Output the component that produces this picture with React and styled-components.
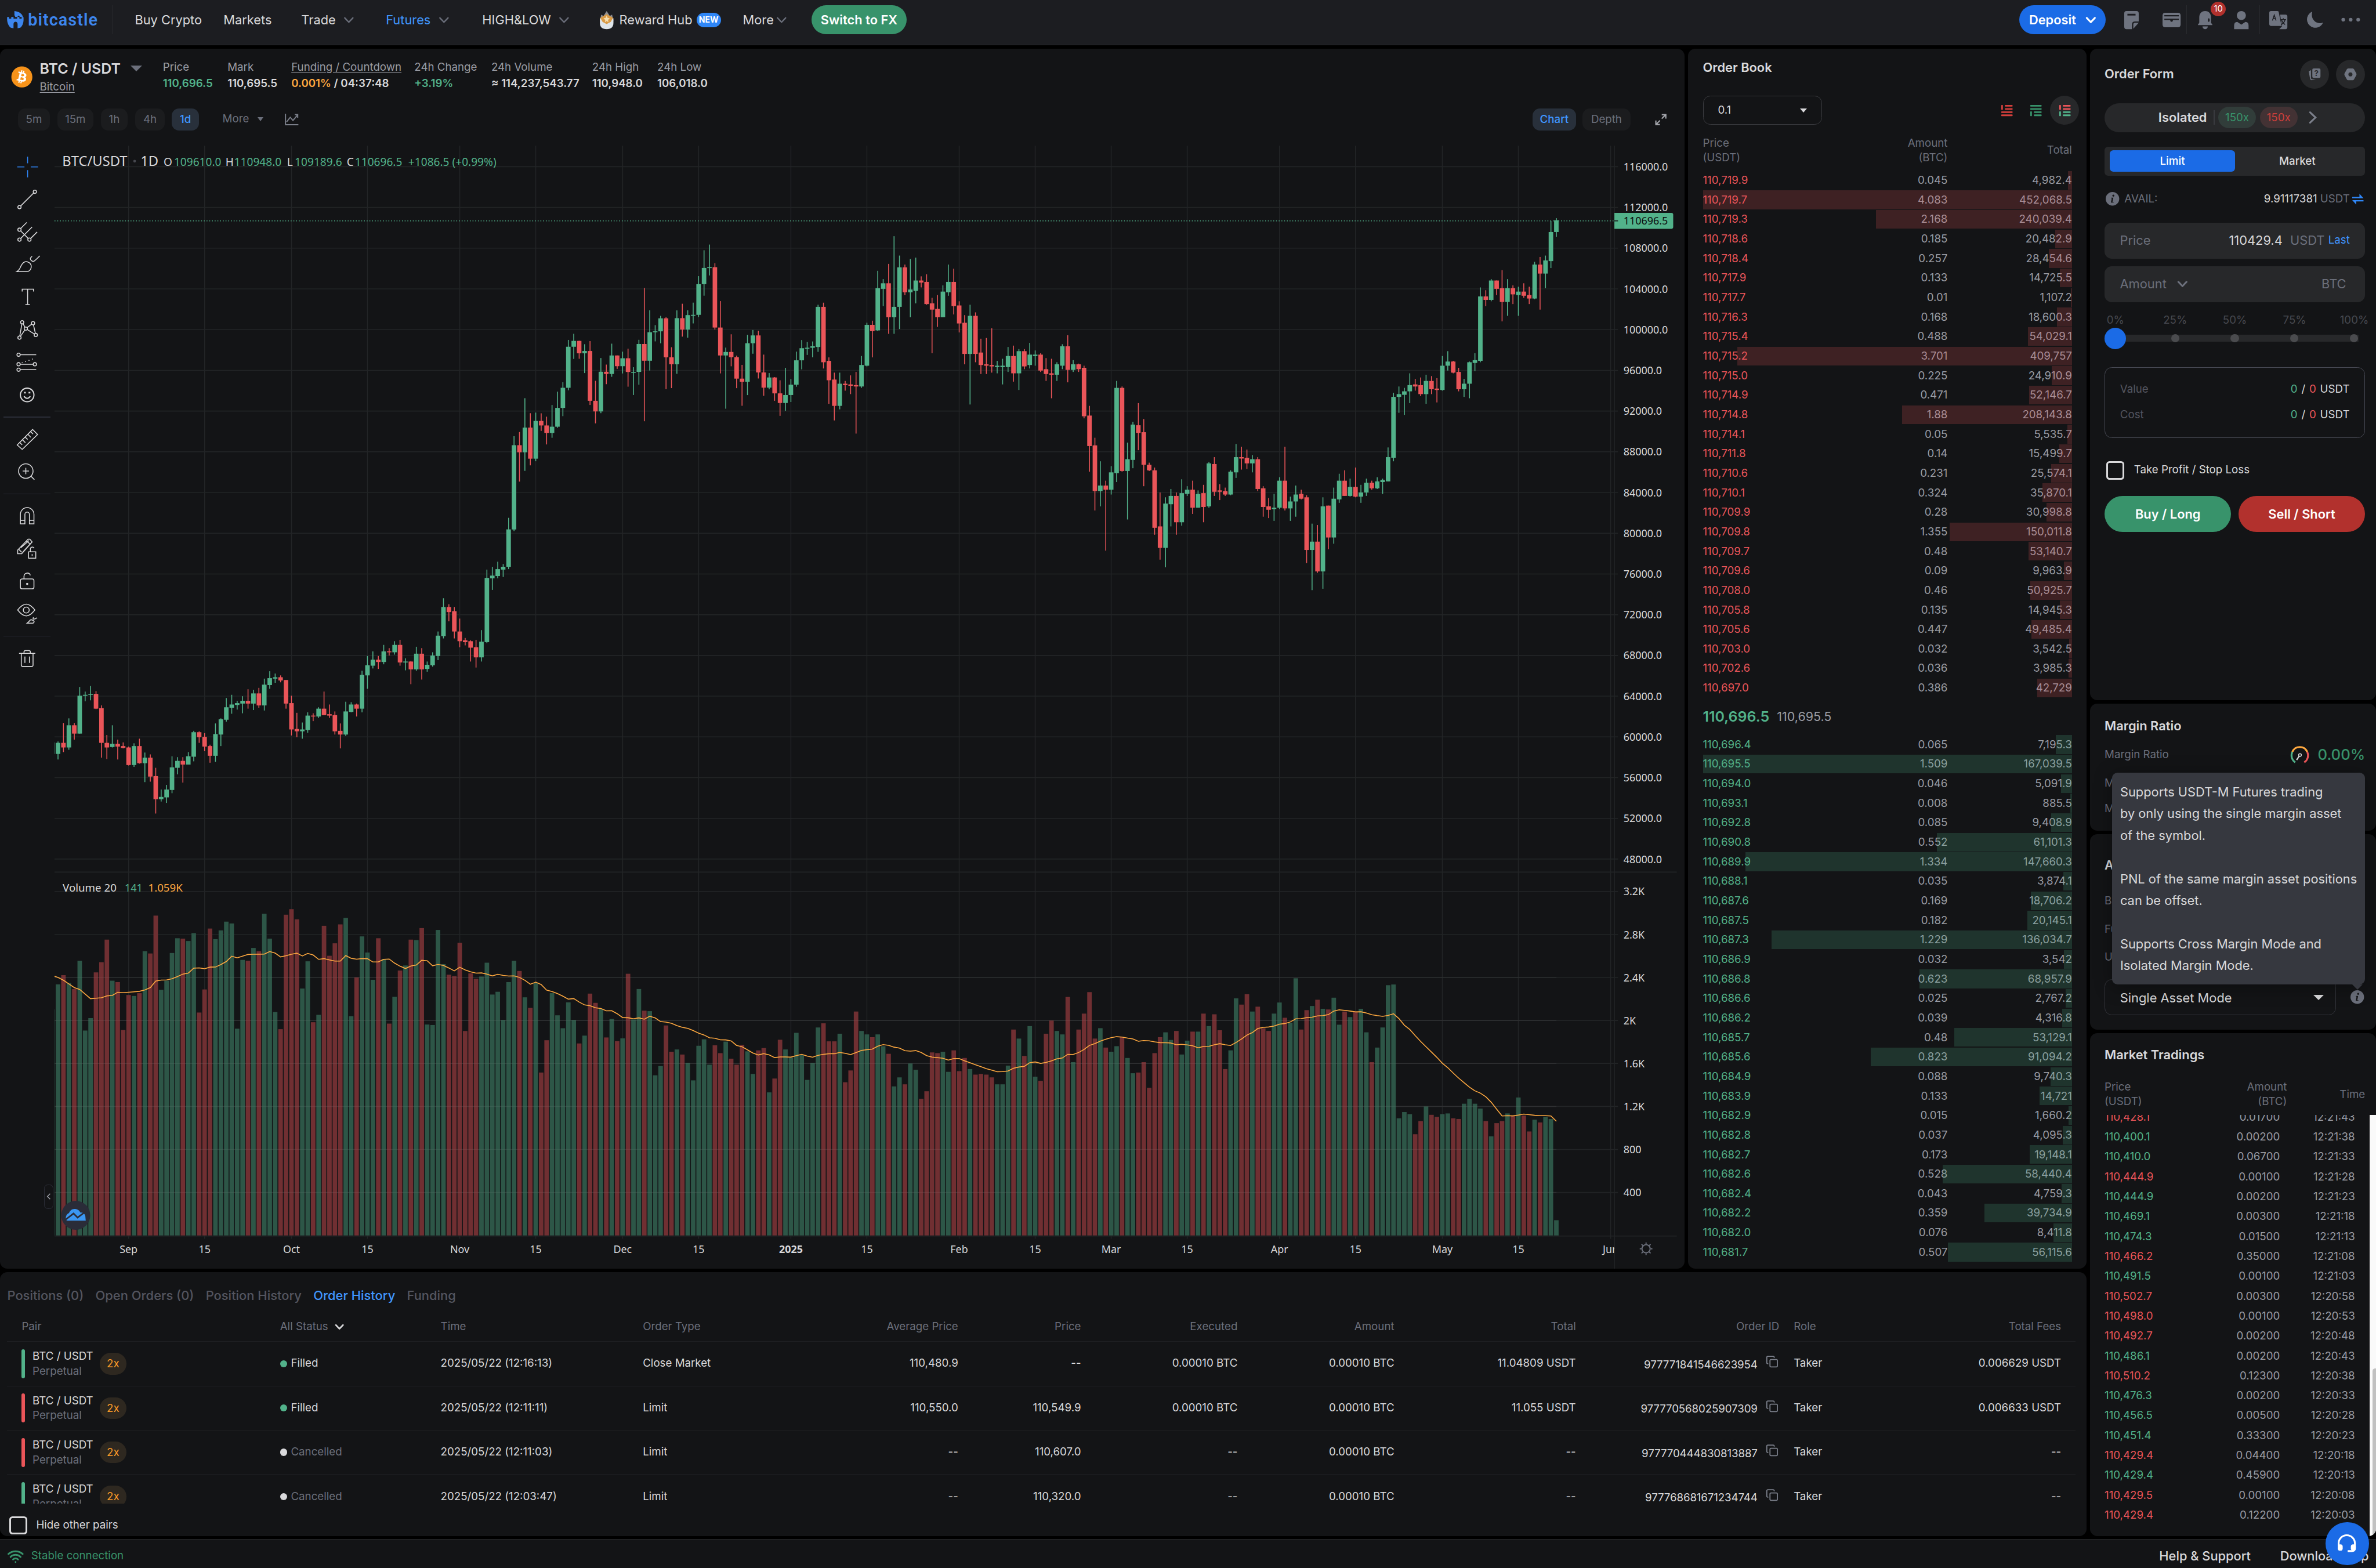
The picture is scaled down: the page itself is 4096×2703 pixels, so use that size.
import React from 'react';
import styled, { createGlobalStyle, css } from 'styled-components';
import { FaBitcoin } from 'react-icons/fa';
import { Copy, Wifi } from 'lucide-react';

/* 1rem equals 100 design pixels on a 5252px wide artboard */
const Global = createGlobalStyle`
  html { font-size: calc(100vw / 52.52); background: #000; }
  body { margin: 0; background: #000; overflow: hidden; }
  *, *::before, *::after { box-sizing: border-box; }
  body, button { font-family: Inter, "Liberation Sans", sans-serif; }
`;

const C = {
  panel: '#131416',
  text: '#d9d9db',
  mid: '#9a9ca4',
  muted: '#6b6f7b',
  dim: '#53555f',
  line: '#1e1f22',
  field: '#27282a',
  green: '#52b28a',
  greenDeep: '#38936b',
  red: '#ea5559',
  redDeep: '#b2312d',
  blue: '#4096ff',
  blueDeep: '#1b6be6',
  orange: '#ffa940',
};

/* ---------- shared ---------- */
const Page = styled.div`
  width: 52.52rem;
  height: 34.66rem;
  display: flex;
  flex-direction: column;
  overflow: hidden;
  color: ${C.text};
  font-size: 0.24rem;
  line-height: 0.32rem;
  white-space: nowrap;
`;

const Panel = styled.section`
  background: ${C.panel};
  border-radius: 0.16rem;
  overflow: hidden;
  flex: none;
  height: ${(p) => p.$h}rem;
  width: ${(p) => (p.$w ? `${p.$w}rem` : 'auto')};
`;

const Row = styled.div`
  display: flex;
  align-items: center;
`;

const Icon = styled.svg`
  display: block;
  flex: none;
  width: ${(p) => p.$w}rem;
  height: ${(p) => p.$h || p.$w}rem;
  fill: ${(p) => p.$fill || 'none'};
  stroke: ${(p) => p.$stroke || 'none'};
  stroke-width: ${(p) => p.$sw || 2};
  stroke-linecap: ${(p) => p.$cap || 'butt'};
  overflow: visible;
`;

const Chevron = ({ w = 0.24, color = C.muted, sw = 4 }) => (
  <Icon $w={w} $h={w} viewBox="0 0 24 24" $stroke={color} $sw={sw} $cap="round">
    <path d="M3 7.5 12 17l9-9.5" strokeLinejoin="round" />
  </Icon>
);

const Caret = styled.i`
  width: 0;
  height: 0;
  border-left: ${(p) => p.$s}rem solid transparent;
  border-right: ${(p) => p.$s}rem solid transparent;
  border-top: ${(p) => p.$h}rem solid ${(p) => p.$c || C.muted};
`;

const InfoIcon = () => (
  <Icon $w={0.3} viewBox="0 0 30 30" $fill={C.muted}>
    <circle cx="15" cy="15" r="15" />
    <path d="M12 12.5h5l-2 9.500h2.500v1.500h-6l2-9.500H12z" fill={C.panel} />
    <circle cx="17" cy="8" r="2.200" fill={C.panel} />
  </Icon>
);

const CheckBox = styled.span`
  width: 0.4rem;
  height: 0.4rem;
  border: 0.04rem solid ${C.text};
  border-radius: 0.07rem;
`;

/* ---------- top bar ---------- */
const Header = styled.header`
  height: 1rem;
  flex: none;
  display: flex;
  align-items: flex-start;
  background: #1c1d21;
  border-bottom: 0.02rem solid #27282b;
  padding: 0.12rem 0 0 0.16rem;
`;

const HeaderInner = styled.div`
  height: 0.64rem;
  display: flex;
  align-items: center;
  flex: 1;
`;

const Logo = styled.div`
  width: 2.34rem;
  height: 0.64rem;
  display: flex;
  align-items: center;
  gap: 0.09rem;
  color: #3d86ee;
  font: 600 0.37rem/0.4rem Roboto, sans-serif;
  letter-spacing: 0.013rem;
  border-right: 0.02rem solid #2a2b2f;
`;

const NavItem = styled.a`
  width: ${(p) => p.$w}rem;
  display: flex;
  align-items: center;
  gap: ${(p) => p.$gap || 0.17}rem;
  font-size: 0.28rem;
  font-weight: 400;
  color: ${(p) => (p.$on ? C.blue : C.text)};
`;

const NewTag = styled.span`
  background: #2f86f6;
  color: #fff;
  border-radius: 0.16rem;
  height: 0.32rem;
  width: 0.54rem;
  text-align: center;
  font-weight: 700;
  font-size: 0.18rem;
`;

const PillButton = styled.button`
  height: ${(p) => p.$h || 0.64}rem;
  width: ${(p) => p.$w}rem;
  border: 0;
  border-radius: 0.4rem;
  padding: 0;
  background: ${(p) => p.$bg};
  color: #fff;
  font-size: 0.28rem;
  font-weight: 600;
  display: flex;
  align-items: center;
  justify-content: center;
  gap: 0.2rem;
`;

const IconStrip = styled.div`
  margin-left: auto;
  display: flex;
  align-items: center;
  height: 0.64rem;
`;

const IconSlot = styled.div`
  width: ${(p) => p.$w}rem;
  height: 0.64rem;
  display: flex;
  align-items: center;
  justify-content: center;
  position: relative;
  ${(p) => p.$rule && css`border-right: 0.02rem solid #2a2b2f;`}
`;

const Bubble = styled.span`
  position: absolute;
  top: -0.08rem;
  left: 0.53rem;
  width: 0.33rem;
  height: 0.32rem;
  border-radius: 50%;
  background: ${C.redDeep};
  color: #fff;
  font-size: 0.19rem;
  text-align: center;
`;

const NavSpacer = styled.span`width: 0.48rem;`;
const StripEnd = styled.span`width: 0.16rem;`;

const RewardIcon = () => (
  <Icon $w={0.38} $h={0.4} viewBox="0 0 38 40">
    <path d="M7 8l5 3 7-11 7 11 5-3 3 14H4z" fill="#8f8f92" />
    <path d="M4 16h30v10q0 14-15 14T4 26z" fill="#dfe5ea" />
    <path d="M5 15l14-8 14 8-5 9-9 5-9-5z" fill="#d99a45" />
    <path d="M19 10l2 5 5 1-4 4 1 5-4-3-4 3 1-5-4-4 5-1z" fill="#f5deb0" />
  </Icon>
);

const HeaderBar = () => (
  <Header>
    <HeaderInner>
      <Logo>
        <Icon $w={0.37} $h={0.38} viewBox="0 0 36 38" $fill="#3d86ee">
          <path d="M16 0c10 1 17 6 19 13h-7l-2-3-4 3h-4l-2-4z" />
          <path d="M0 13h4v4h5v-4h5v4h8v-4h5v4h5v-4h4c1 11-1 19-7 24l-6 1V29c0-7-9-7-9 0v9l-6-1C2 32-1 24 0 13z" />
        </Icon>
        bitcastle
      </Logo>
      <Row>
        <NavSpacer />
        <NavItem $w={1.96}>Buy Crypto</NavItem>
        <NavItem $w={1.72}>Markets</NavItem>
        <NavItem $w={1.87}>Trade <Chevron sw={3} /></NavItem>
        <NavItem $w={2.13} $on>Futures <Chevron sw={3} /></NavItem>
        <NavItem $w={2.56}>HIGH&amp;LOW <Chevron sw={3} /></NavItem>
        <NavItem $w={3.2} $gap={0.09}>
          <RewardIcon />
          <span>Reward Hub</span>
          <NewTag>NEW</NewTag>
        </NavItem>
        <NavItem $w={1.52} $gap={0.05}>More <Chevron sw={3} /></NavItem>
        <PillButton $w={2.1} $bg={C.greenDeep}>Switch to FX</PillButton>
      </Row>
      <IconStrip>
        <PillButton $w={1.92} $bg={C.blueDeep}>Deposit <Chevron color="#fff" sw={4} /></PillButton>
        <IconSlot $w={1.12}>
          <Icon $w={0.32} $h={0.4} viewBox="0 0 32 40" $fill="#6f7480">
            <path fillRule="evenodd" d="M5 0h22q5 0 5 5v18h-8q-7 0-7 7v10H5q-5 0-5-5V5q0-5 5-5zm2 6v4h18V6z" />
            <path d="M20 39V30q0-4 4-4h8z" />
          </Icon>
        </IconSlot>
        <IconSlot $w={0.67} $rule>
          <Icon $w={0.4} $h={0.32} viewBox="0 0 40 32" $fill="#6f7480">
            <path fillRule="evenodd" d="M6 0h28q6 0 6 6v20q0 6-6 6H6q-6 0-6-6V6q0-6 6-6zM4 5v3h32V5zm0 8v3h13q0 4 3 4t3-4h13v-3z" />
          </Icon>
        </IconSlot>
        <IconSlot $w={0.8}>
          <Icon $w={0.32} $h={0.4} viewBox="0 0 32 40" $fill="#6f7480">
            <path d="M16 0c8 0 13 6 13 14v12l3 4v1H0v-1l3-4V14C3 6 8 0 16 0zM10 34h12q-1 6-6 6t-6-6z" />
            <ellipse cx="24" cy="20" rx="2" ry="4" fill="#1c1d21" />
          </Icon>
          <Bubble>10</Bubble>
        </IconSlot>
        <IconSlot $w={0.82} $rule>
          <Icon $w={0.33} $h={0.4} viewBox="0 0 32 40" $fill="#6f7480">
            <circle cx="16" cy="10" r="10" />
            <path d="M0 32q0-8 7-8l9 6 9-6q7 0 7 8v8H0z" />
          </Icon>
        </IconSlot>
        <IconSlot $w={0.8}>
          <Icon $w={0.4} viewBox="0 0 40 40" $fill="#6f7480">
            <path d="M4 0h14q3 0 3 3l6 30H4q-4 0-4-4V4q0-4 4-4z" />
            <path d="M24 8h12q4 0 4 4v24q0 4-4 4H22l6-6z" />
            <path d="M7 21l4-12 4 12M8.500 17h5" fill="none" stroke="#1c1d21" strokeWidth="2" />
            <path d="M25 19h12M31 16v3m4 0q-2 8-9 11m1-11q2 7 8 11" fill="none" stroke="#1c1d21" strokeWidth="2" />
          </Icon>
        </IconSlot>
        <IconSlot $w={0.8}>
          <Icon $w={0.37} viewBox="0 0 37 37" $fill="#6f7480">
            <path d="M13 0A18.500 18.500 0 1 0 37 24C24 30 8 18 13 0z" />
          </Icon>
        </IconSlot>
        <IconSlot $w={0.8}>
          <Icon $w={0.42} $h={0.1} viewBox="0 0 42 10" $fill="#6f7480">
            <circle cx="4.500" cy="5" r="4" /><circle cx="21" cy="5" r="4" /><circle cx="37.500" cy="5" r="4" />
          </Icon>
        </IconSlot>
        <StripEnd />
      </IconStrip>
    </HeaderInner>
  </Header>
);

/* ---------- ticker ---------- */
const Ticker = styled.div`
  height: 1.24rem;
  padding-left: 0.24rem;
  display: flex;
  align-items: flex-start;
`;

const Coin = styled(FaBitcoin)`
  display: block;
  width: 0.48rem;
  height: 0.48rem;
  margin-top: 0.38rem;
  color: #f7931a;
  background: radial-gradient(circle, #fff 62%, transparent 64%);
`;

const PairBlock = styled.div`
  width: 2.0rem;
  margin-left: 0.16rem;
  padding-top: 0.24rem;
`;

const PairName = styled.div`
  font-size: 0.32rem;
  line-height: 0.4rem;
  font-weight: 600;
`;

const PairSub = styled.div`
  color: ${C.mid};
  line-height: 0.4rem;
  text-decoration: underline;
  text-underline-offset: 0.04rem;
`;

const PairCaret = styled.div`
  width: 0.72rem;
  padding-top: 0.37rem;
`;

const Stat = styled.div`
  width: ${(p) => p.$w}rem;
  padding-top: 0.23rem;
  line-height: 0.36rem;
`;

const StatLabel = styled.div`
  color: ${C.mid};
  span { text-decoration: ${(p) => (p.$u ? 'underline' : 'none')}; text-underline-offset: 0.03rem; }
`;

const StatValue = styled.div`
  font-weight: 600;
  color: ${(p) => p.$c || C.text};
  b { font-weight: 600; color: ${C.orange}; }
`;

const STATS = [
  { label: 'Price', value: '110,696.5', w: 1.43, c: C.green },
  { label: 'Mark', value: '110,695.5', w: 1.41 },
  { label: 'Funding / Countdown', value: <><b>0.001%</b> / 04:37:48</>, w: 2.72, u: true },
  { label: '24h Change', value: '+3.19%', w: 1.7, c: C.green },
  { label: '24h Volume', value: '≈ 114,237,543.77', w: 2.23 },
  { label: '24h High', value: '110,948.0', w: 1.44 },
  { label: '24h Low', value: '106,018.0', w: 1.4 },
];

const FrameBar = styled.div`
  height: 0.64rem;
  display: flex;
  align-items: center;
  padding: 0 0.39rem 0 0.4rem;
  color: ${C.muted};
`;

const Frame = styled.button`
  height: 0.48rem;
  width: ${(p) => p.$w}rem;
  margin-right: ${(p) => p.$mr || 0.17}rem;
  padding: 0;
  border: 0;
  border-radius: 0.16rem;
  font-size: 0.24rem;
  font-weight: ${(p) => (p.$on ? 500 : 400)};
  color: ${(p) => (p.$on ? C.blue : C.muted)};
  background: ${(p) => (p.$on ? '#28303b' : '#1b1c1e')};
`;

const MoreFrames = styled.div`
  display: flex;
  align-items: center;
  gap: 0.19rem;
  margin-left: 0.35rem;
  width: 1.38rem;
`;

const FrameRight = styled.div`
  margin-left: auto;
  display: flex;
  align-items: center;
`;

/* ---------- drawing tools ---------- */
const Tools = styled.div`
  width: 1.2rem;
  height: 25.08rem;
  padding-top: 0.37rem;
  display: flex;
  flex-direction: column;
  align-items: center;
`;

const Tool = styled.div`
  height: 0.72rem;
  display: flex;
  align-items: center;
`;

const ToolRule = styled.div`
  width: 1.04rem;
  height: 0.26rem;
  display: flex;
  align-items: center;
  &::before { content: ''; flex: 1; height: 0.02rem; background: #2a2c36; }
`;

const dot = (x, y, r = 1.8) => <circle cx={x} cy={y} r={r} fill={C.panel} />;

const TOOL_GROUPS = [
  [
    <g stroke="#2f86f6"><path d="M3 14h8M18 14h8M14.500 2.500V10M14.500 17.500V25.500" /></g>,
    <g><path d="M5.500 22.500l17-17" />{dot(5.5, 22.5)}{dot(22.5, 5.5)}</g>,
    <g><path d="M5.500 11.500l8-8M5.500 22.500L19.500 8.500M16.500 22.500l8.500-8.500M5.500 11.500l11 11" />{dot(5.5, 11.5)}{dot(5.5, 22.5)}{dot(16.5, 22.5)}</g>,
    <path d="M2.500 22q3-2 4.500-6 3-6 7-5 5 1.500 4.500 6t-5 5zM19.500 5q-3 2-1.500 4t3.500 1.500q1-.5 6.500-6" />,
    <path d="M8.500 8V5.500h12.500V8M14.500 5.500v17M12 22.500h5" />,
    <g><path d="M5.500 22.500l3-17 4 7zM12.500 12.500l8-6 3 13z" />{dot(8.5, 5.5)}{dot(12.5, 12.5)}{dot(20.5, 6.5)}{dot(23.5, 19.5)}{dot(5.5, 22.5)}</g>,
    <g><path d="M4.500 5.500H24M4.500 16H22M4.500 22H24" /><path d="M8 14.500l14-5" strokeDasharray="1 3" />{dot(4.5, 5.5)}{dot(4.5, 16)}{dot(22.5, 16)}{dot(4.5, 22)}</g>,
    <g strokeWidth="1.300"><circle cx="14" cy="14" r="7.500" /><path d="M10.500 15.500q3.500 4.500 7 0" /><path d="M10.500 11.500h2M15.500 11.500h2" strokeWidth="1.800" /></g>,
  ],
  [
    <path d="M3 20.500L20 3.500l5.500 5.500L8.500 25.500zM6 18l2.500 2.500M9 15l3 3M12 12l2.500 2.500M15 9l3 3M18 6l2.500 2.500" />,
    <g><circle cx="12.500" cy="13.500" r="8" /><path d="M18.500 19.500l3.500 3.500M9 13.500h7M12.500 10v7" /></g>,
  ],
  [
    <path d="M6.500 22.500V12a7.500 7.500 0 0 1 15 0v10.500h-5V12a2.500 2.500 0 0 0-5 0v10.500zM6.500 18.500h5M16.500 18.500h5" />,
    <g><path d="M3.500 15.500L15 3.500h2l2.500 3L8 19.500H3.500zM5 15l3 3M7 13l9-8M9 18L18 8M13 5.500l4 3" /><path d="M15.500 17.500h8v7h-8zM17.500 17.500v-3a2.200 2.200 0 0 1 4.200-1" fill={C.panel} /><path d="M19.500 20v2" /></g>,
    <g><rect x="6.500" y="11.500" width="15" height="11" rx="2" /><path d="M10.500 11.500V8.500a3.600 3.600 0 0 1 7-1" /><circle cx="14" cy="17" r="1.200" fill="#d9d9db" stroke="none" /></g>,
    <g><path d="M3.500 10q5-6.500 9.500-6.500T22.500 10q-5 6.500-9.500 6.500T3.500 10z" /><circle cx="13" cy="10" r="3.300" /><path d="M14 24.500q2-1.500 3-3t3.500 0 0 3zM21 18q-1 1.500 0 2t4-1.500" /></g>,
  ],
  [<path d="M5 8.500h18M7.500 8.500v13q0 1.500 1.500 1.500h10q1.500 0 1.500-1.500v-13M10.500 8.500V7q0-1.500 1.500-1.500h4q1.500 0 1.500 1.500v1.500M11.500 12v7M16.500 12v7" />],
];

const ToolBar = () => (
  <Tools>
    {TOOL_GROUPS.map((group, g) => (
      <React.Fragment key={g}>
        {g > 0 && <ToolRule />}
        {group.map((shape, i) => (
          <Tool key={i}>
            <Icon $w={0.56} viewBox="0 0 28 28" $stroke="#d9d9db" $sw={1}>{shape}</Icon>
          </Tool>
        ))}
      </React.Fragment>
    ))}
  </Tools>
);

/* ---------- price and volume series ---------- */
/* Each entry: direction, body top, body bottom, high, low, counted in ticks below `top` */
const EARLY = { top: 79063, tick: 45.38, rows: `g 432 457 430 460,g 433 457 430 469,r 433 443 390 453,g 395 443 380 448,r 395 413 390 426,g 331 413 312 413,g 329 331 322 343,g 327 329 310 341,r 327 359 321 360,r 358 433 352 465,r 433 443 416 468,g 435 442 395 443,r 435 441 426 469,r 440 444 432 445,r 443 481 441 482,g 440 481 434 485,r 440 477 424 478,g 465 477 454 518,r 465 506 458 517,r 505 555 487 586,g 550 555 534 560,g 534 551 524 563,g 486 535 462 542,g 472 487 464 501,r 472 480 464 519,g 462 480 453 480,g 410 463 407 473,r 410 421 408 433,r 420 441 412 451,r 440 461 437 476,g 414 461 391 474,g 382 415 380 440,g 356 383 336 387,g 350 357 329 370,g 347 351 342 361,g 342 348 332 369,r 342 348 317 359,g 326 348 318 362,r 326 352 314 357,g 307 352 294 363,g 293 308 278 316,g 291 294 283 303,r 291 298 287 302,r 297 348 297 359,r 347 404 331 417,r 403 408 368 421,g 404 408 389 424,g 374 405 367 411,r 374 376 369 386,g 359 376 356 379,r 359 373 322 373,r 371 374 350 379,r 373 408 365 415,r 407 415 391 445,g 365 415 344 418,g 350 366 345 367,r 350 359 348 376,g 286 359 277 367,g 265 287 245 316,g 253 266 235 272,r 253 258 245 273,g 235 258 221 263,r 235 237 228 244,g 221 237 213 242,r 221 259 210 266,g 257 259 250 276,r 257 274 256 306,g 240 274 225 277,r 240 274 228 296,g 264 273 257 279,g 244 265 237 268,g 201 245 192 254,g 139 202 120 207,r 139 150 133 170,r 148 192 139 207,r 192 213 164 226,r 211 215 206 222,r 213 227 211 257,r 226 248 210 270,g 214 248 189 257,g 76 215 58 217,g 71 77 52 102,g 57 72 41 77,g 52 58 46 74,g -29 52 -54 57` };

/* high, low, close; every day opens at the previous close */
const WINTER = `89530 80216 88648,89940 85072 87952,93265 86127 90375,91790 86668 87325,91850 87073 91032,91779 90056 90586,91449 88722 89855,92594 89376 90464,93905 90357 92310,94831 91500 94286,98988 94040 98317,99588 97122 98892,98908 97136 97672,98564 95734 97900,98871 92600 93010,94973 90791 91965,97208 91792 95863,96564 94640 95643,98619 95364 97460,97463 96144 96407,97836 95693 97185,98130 94395 95840,96305 93578 95849,99000 94587 98587,104088 91000 96945,101898 95981 99740,100439 98844 99831,101351 98657 101109,101215 94150 97276,98270 94256 96593,101888 95658 101125,102540 99311 100004,101895 99205 101424,102650 100609 101450,105250 101234 104463,107793 103333 106058,108353 105321 106133,106524 100000 100204,102800 95700 97461,98233 92232 97805,99540 96398 97291,97448 94250 95186,96538 92520 94881,99487 93569 98663,99963 97632 99429,99884 95199 95791,97544 93500 94299,95733 94135 95300,95340 93009 93738,95024 91530 92792,96250 92033 93576,95151 92888 94591,97839 94392 96984,98976 96100 98174,98778 97514 98220,98836 97276 98363`;

const RECENT = { top: 114619, tick: 68.03, rows: `g 182 240 179 247,r 182 262 176 271,r 260 288 255 322,r 287 325 277 346,g 293 325 277 330,r 293 295 289 303,r 294 296 281 308,r 295 297 276 365,g 266 297 253 299,g 208 267 205 268,r 208 217 202 255,g 155 216 130 217,g 148 156 142 181,r 148 197 120 221,g 182 197 80 221,g 125 182 108 214,r 125 161 121 165,g 157 161 113 197,g 144 159 111 177,r 144 147 138 154,r 146 178 135 179,r 177 186 169 249,r 185 197 165 211,g 160 197 151 197,g 146 161 121 166,r 146 181 127 193,r 180 206 174 219,r 205 250 194 265,g 195 250 179 323,r 195 250 190 262,r 248 266 228 279,r 265 267 227 279,r 266 268 213 277,g 267 269 260 278,g 267 269 257 294,g 253 269 240 276,r 253 278 238 290,g 246 278 243 302,r 246 268 243 272,g 251 266 234 271,g 251 253 245 267,r 251 274 249 276,r 272 279 256 289,r 278 280 257 314,g 265 280 262 289,g 239 267 236 272,r 239 273 223 291,g 265 273 259 276,r 265 272 264 276,r 270 340 267 343,r 339 383 325 420,r 382 448 371 476,g 440 448 405 470,r 440 446 433 534,g 421 446 412 453,g 299 422 289 435,r 299 419 297 420,g 402 419 378 489,g 352 403 348 415,r 353 364 321 389,r 363 410 344 441,r 410 418 407 419,r 418 501 414 511,r 499 530 450 547,g 466 530 457 558,g 455 467 445 499,r 455 493 450 511,g 451 493 431 498,g 446 452 441 455,r 446 472 433 481,g 452 472 447 472,r 451 471 439 493,g 408 470 406 472,r 409 449 399 455,r 447 449 438 461,r 448 453 443 455,g 420 453 418 454,g 399 421 380 429,r 399 401 384 417,r 400 408 388 416,g 402 408 396 421,r 402 445 399 448,r 444 471 441 485,r 470 475 458 487,g 472 474 452 491,g 433 472 428 474,r 433 473 384 476,g 463 473 456 491,g 453 463 440 485,r 452 459 446 460,r 457 533 454 552,g 521 533 495 591,r 521 564 497 566,g 470 564 457 589,r 469 515 469 532,g 459 515 443 524,g 433 460 423 465,r 433 455 418 455,g 442 455 430 456,r 442 456 414 457,g 450 456 439 465,g 436 450 430 455,r 436 444 433 446,g 434 444 428 445,g 432 435 430 452,g 399 434 385 434,g 312 400 306 405,g 308 312 297 335,g 304 309 299 338,g 295 304 278 321,r 294 297 286 303,r 295 308 284 311,g 289 308 280 322,r 289 301 282 308,r 300 302 285 320,g 267 302 253 303,g 261 267 246 274,r 261 277 260 278,r 276 301 270 304,g 293 301 286 312,g 262 293 261 314,g 259 263 249 275,g 167 260 154 262,r 167 172 158 181,g 144 172 142 174,r 144 156 144 165,r 155 175 129 203,g 155 175 142 195,r 155 164 151 178,g 160 165 153 195,r 160 166 148 169,r 165 170 153 178,g 121 170 117 171,r 121 134 110 186,g 115 134 108 155,g 74 116 58 126,g 57 74 54 81` };

const fromTicks = ({ top, tick, rows }) =>
  rows.split(',').map((r) => {
    const [d, a, b, h, l] = r.split(' ');
    const p = (v) => top - Number(v) * tick;
    return { up: d === 'g', hi: p(a), lo: p(b), high: p(h), low: p(l) };
  });

const fromCloses = (rows, first) => {
  let open = first;
  return rows.split(',').map((r) => {
    const [high, low, close] = r.split(' ').map(Number);
    const bar = { up: close >= open, hi: Math.max(open, close), lo: Math.min(open, close), high, low };
    open = close;
    return bar;
  });
};

const BARS = [...fromTicks(EARLY), ...fromCloses(WINTER, 80370), ...fromTicks(RECENT)];

const VOL_EARLY = '1010 956 936 953 966 905 1056 1029 930 908 859 948 951 1055 979 981 975 884 889 807 968 948 888 856 857 862 845 1017 967 835 858 839 820 824 1052 903 905 877 884 803 857 1016 1053 805 793 815 965 906 1038 1022 829 894 867 826 812 1025 941 852 887 946 856 901 1041 983 926 915 859 860 834 1043 1044 838 912 935 938 866 1057 932 944 939 909 978 972 1033 951 905 927 984 1007 953 1147 1077 975 1023 1051 995 1033 1084 1067 976 996 1009 1071 1031 1079 1073 933 1032 966 1013 1014 1153 1133 1045 1102 1097 1108 1126 1164 1089 1075 1130 1088 1105 1080 1117 1130 1087 1101 1150 1099 1094 1190 1160 1076 1097 1115 1061 1109 1163 1126';
const VOL_RECENT = '1223 1217 1243 1243 1232 1302 1285 1200 1228 1233 1237 1233 1250 1261 1308 1295 1305 1275 1284 1326 1315 1259 1260 1258 1287 1256 1286 1267 1283 1291 1290 1291 1295 1305 1305 1278 1226 1239 1264 1221 1294 1300 1232 1213 1228 1233 1179 1273 1226 1203 1172 1239 1224 1252 1258 1250 1237 1267 1289 1288 1273 1310 1260 1237 1230 1241 1228 1262 1242 1229 1229 1203 1221 1204 1227 1283 1256 1181 1190 1175 1200 1193 1224 1228 1203 1187 1209 1216 1152 1226 1198 1192 1183 1196 1197 1180 1219 1200 1208 1200 1196 1230 1273 1252 1223 1162 1161 1354 1345 1348 1377 1358 1337 1349 1352 1348 1347 1354 1355 1333 1326 1333 1340 1358 1380 1361 1358 1347 1350 1324 1350 1373 1356 1360 1352 1355 1501';
const VOLUMES = [
  ...VOL_EARLY.split(' ').map((v) => (1500 - v) * 4.294),
  ...VOL_RECENT.split(' ').map((v) => (1523 - v) * 6.45),
];
const MA_LEAD = [937, 941, 947, 955, 963, 967, 977, 987, 986, 985, 981, 980, 973, 974, 973, 972, 971, 968, 963].map((v) => (1500 - v) * 4.294);
const MA = VOLUMES.map((_, i) =>
  i < 19 ? MA_LEAD[i] : VOLUMES.slice(i - 19, i + 1).reduce((s, v) => s + v, 0) / 20
);

const xOf = (i) => 115.7 + i * 12;
const yOf = (p) => 458.3 + (112000 - p) * 0.0225055;
const vOf = (v) => 2730.6 - v * 0.23757;

const TIME_TICKS = [
  [14, 'Sep'], [28, '15'], [44, 'Oct'], [58, '15'], [75, 'Nov'], [89, '15'], [105, 'Dec'], [119, '15'],
  [136, '2025'], [150, '15'], [167, 'Feb'], [181, '15'], [195, 'Mar'], [209, '15'], [226, 'Apr'], [240, '15'],
  [256, 'May'], [270, '15'], [287, 'Jun'],
];
const PRICE_TICKS = Array.from({ length: 18 }, (_, i) => 116000 - i * 4000);
const VOL_TICKS = [[3200, '3.2K'], [2800, '2.8K'], [2400, '2.4K'], [2000, '2K'], [1600, '1.6K'], [1200, '1.2K'], [800, '800'], [400, '400']];

const ChartSvg = styled.svg`
  display: block;
  width: 36.03rem;
  height: 25.08rem;
  text { font-family: "Noto Sans", "Open Sans", sans-serif; font-size: 23px; fill: ${C.text}; }
  .grid { stroke: #222426; stroke-width: 2; fill: none; }
  .veil { stroke: rgba(255, 255, 255, 0.06); stroke-width: 2; fill: none; }
  .up { fill: ${C.green}; }
  .down { fill: ${C.red}; }
  .time { text-anchor: middle; }
  .bold { font-weight: 700; }
  .title { font-size: 30.5px; }
  .ohlc { font-size: 24.5px; }
  .gain { fill: ${C.green}; }
  .avg { fill: ${C.orange}; }
`;

const OHLC = [
  ['O', '109610.0', 361, 384], ['H', '110948.0', 498, 517], ['L', '109189.6', 634, 651], ['C', '110696.5', 766, 784],
];

const Chart = () => (
  <ChartSvg viewBox="120 296 3603 2508">
    <defs>
      <clipPath id="plot"><rect x="120" y="322" width="3448" height="2482" /></clipPath>
    </defs>
    <g className="grid">
      {TIME_TICKS.map(([d]) => <path key={d} d={`M${xOf(d)} 322V2738`} />)}
      {PRICE_TICKS.map((p) => <path key={p} d={`M120 ${yOf(p)}H3576`} />)}
      {VOL_TICKS.map(([v]) => <path key={v} d={`M120 ${vOf(v)}H3576`} />)}
      <path d="M120 1927.500H3706M120 2732H3706M3568 322V2804" />
    </g>
    <g clipPath="url(#plot)">
      {BARS.map((b, i) => (
        <rect key={i} x={xOf(i) - 5} y={vOf(VOLUMES[i])} width="10" height={2730.6 - vOf(VOLUMES[i])} fill={b.up ? '#2d5647' : '#702f32'} />
      ))}
      <g className="veil">
        {VOL_TICKS.slice(2).map(([v]) => <path key={v} d={`M120 ${vOf(v)}H3440`} />)}
      </g>
      <polyline points={MA.map((v, i) => `${xOf(i)},${vOf(v)}`).join(' ')} fill="none" stroke={C.orange} strokeWidth="2" />
      {BARS.map((b, i) => (
        <g key={i} className={b.up ? 'up' : 'down'}>
          <rect x={xOf(i) - 1} y={yOf(b.high)} width="2" height={Math.max(2, yOf(b.low) - yOf(b.high))} />
          <rect x={xOf(i) - 5} y={yOf(b.hi)} width="10" height={Math.max(2, yOf(b.lo) - yOf(b.hi))} />
        </g>
      ))}
      <path d="M120 488H3568" stroke={C.green} strokeWidth="2" strokeDasharray="2 4" />
      {TIME_TICKS.map(([d, t]) => (
        <text key={d} x={xOf(d)} y="2769" className={t === '2025' ? 'time bold' : 'time'}>{t}</text>
      ))}
    </g>
    {PRICE_TICKS.map((p) => <text key={p} x="3588" y={yOf(p) + 8.5}>{p}.0</text>)}
    {VOL_TICKS.map(([v, t]) => <text key={v} x="3588" y={vOf(v) + 8.5}>{t}</text>)}
    <path d="M3568 470.500H3694q4 0 4 4v27q0 4-4 4H3568z" className="up" />
    <path d="M3568 488h8" stroke={C.panel} strokeWidth="2" />
    <text x="3588" y="496.500" style={{ fill: '#0c0d0e' }}>110696.5</text>

    <text className="title" x="137" y="366">BTC/USDT</text>
    <circle cx="297" cy="356" r="3" fill="#46484f" />
    <text className="title" x="310" y="366">1D</text>
    {OHLC.map(([k, v, a, b]) => (
      <React.Fragment key={k}>
        <text className="ohlc" x={a} y="366">{k}</text>
        <text className="ohlc gain" x={b} y="366">{v}</text>
      </React.Fragment>
    ))}
    <text className="ohlc gain" x="902" y="366">+1086.5 (+0.99%)</text>

    <text x="138" y="1970" style={{ fontSize: 24 }}>Volume 20</text>
    <text x="275" y="1970" className="gain">141</text>
    <text x="327" y="1970" className="avg" style={{ fontSize: 24 }}>1.059K</text>

    <circle cx="167" cy="2686" r="32" fill="#2a2c38" />
    <path d="M145 2694q-1-9 7-13 4-10 14-9 8 1 11 8 8-1 11 7l1 11h-38q-6 0-6-4z" fill="#3b97f3" />
    <path d="M144 2696l18-14 9 9 16-12" stroke="#2a2c38" strokeWidth="3.500" fill="none" />
    <g stroke="#6b6f7b" strokeWidth="2.500" fill="none">
      <circle cx="3638" cy="2760" r="9" />
      <path d="M3638 2746v4M3638 2770v4M3624 2760h4M3648 2760h4M3628 2750l3 3M3645 2767l3 3M3628 2770l3-3M3645 2753l3-3" />
    </g>
  </ChartSvg>
);

const ChartRow = styled.div`
  display: flex;
  position: relative;
`;

const Handle = styled.div`
  position: absolute;
  left: 0.98rem;
  top: 23.22rem;
  width: 0.2rem;
  height: 0.54rem;
  display: flex;
  align-items: center;
  justify-content: center;
  border: 0.02rem solid #2a2c36;
  border-radius: 0.08rem;
  background: ${C.panel};
`;

const ChartPanel = () => (
  <Panel $w={37.23} $h={26.96}>
    <Ticker>
      <Coin />
      <PairBlock>
        <PairName>BTC / USDT</PairName>
        <PairSub>Bitcoin</PairSub>
      </PairBlock>
      <PairCaret><Caret as="div" $s={0.13} $h={0.14} /></PairCaret>
      {STATS.map((s) => (
        <Stat key={s.label} $w={s.w}>
          <StatLabel $u={s.u}><span>{s.label}</span></StatLabel>
          <StatValue $c={s.c}>{s.value}</StatValue>
        </Stat>
      ))}
    </Ticker>
    <FrameBar>
      <Frame $w={0.7}>5m</Frame>
      <Frame $w={0.79}>15m</Frame>
      <Frame $w={0.59}>1h</Frame>
      <Frame $w={0.65} $mr={0.16}>4h</Frame>
      <Frame $w={0.6} $on>1d</Frame>
      <MoreFrames>More <Caret $s={0.075} $h={0.09} /></MoreFrames>
      <Icon $w={0.3} $h={0.26} viewBox="0 0 30 26" $stroke="#7b7f8a" $sw={2.5}>
        <path d="M1.500 0v24.500H30M4 18l8-10 6 7L28 3M22 2h6.500v7" />
      </Icon>
      <FrameRight>
        <Frame $w={0.97} $on $mr={0.14}>Chart</Frame>
        <Frame $w={1.06} $mr={0.54}>Depth</Frame>
        <Icon $w={0.26} viewBox="0 0 26 26" $stroke="#a2a4aa" $sw={2.8}>
          <path d="M15 2h9v9M24 2L15 11M2 15v9h9M2 24l9-9" />
        </Icon>
      </FrameRight>
    </FrameBar>
    <ChartRow>
      <ToolBar />
      <Chart />
      <Handle>
        <Icon $w={0.08} $h={0.14} viewBox="0 0 8 14" $stroke="#9a9ca4" $sw={2}><path d="M7 1L1 7l6 6" /></Icon>
      </Handle>
    </ChartRow>
  </Panel>
);

/* ---------- order book ---------- */
const BookBody = styled.div`
  padding: 0.25rem 0.32rem 0 0.33rem;
`;

const Title = styled.h2`
  margin: 0;
  font-size: 0.28rem;
  line-height: 0.32rem;
  font-weight: 600;
`;

const BookControls = styled.div`
  display: flex;
  align-items: center;
  height: 0.64rem;
  margin: 0.47rem -0.16rem 0.25rem 0;
`;

const StepSelect = styled.div`
  width: 2.63rem;
  height: 0.64rem;
  margin-right: auto;
  padding: 0 0.32rem;
  display: flex;
  align-items: center;
  justify-content: space-between;
  border: 0.02rem solid #3a3b3f;
  border-radius: 0.16rem;
`;

const RoundSlot = styled.div`
  width: 0.64rem;
  height: 0.64rem;
  display: flex;
  align-items: center;
  justify-content: center;
  border-radius: 50%;
  background: ${(p) => (p.$on ? '#27282a' : 'transparent')};
`;

const BookHead = styled.div`
  display: flex;
  align-items: center;
  height: 0.64rem;
  color: ${C.muted};
`;

const PriceCell = styled.span`
  width: ${(p) => p.$w || 2.4}rem;
  color: ${(p) => (p.$side === 'ask' ? C.red : p.$side === 'bid' ? C.green : 'inherit')};
`;

const NumCell = styled.span`
  width: ${(p) => p.$w}rem;
  text-align: right;
`;

const BookList = styled.div`
  padding-top: ${(p) => p.$pt}rem;
`;

const BookRow = styled.div`
  position: relative;
  display: flex;
  align-items: center;
  height: 0.4316rem;
  color: ${C.mid};
`;

const Depth = styled.span`
  position: absolute;
  right: 0;
  top: 0;
  bottom: 0.018rem;
  background: ${(p) => (p.$side === 'ask' ? 'rgba(234,85,89,.2)' : 'rgba(82,178,138,.2)')};
`;

const MidPrice = styled.div`
  height: 0.82rem;
  display: flex;
  align-items: center;
  gap: 0.17rem;
  color: ${C.mid};
  font-size: 0.275rem;
  b { font-size: 0.32rem; font-weight: 600; color: ${C.green}; }
`;

const ASKS = `110,719.9 0.045 4,982.4|110,719.7 4.083 452,068.5|110,719.3 2.168 240,039.4|110,718.6 0.185 20,482.9|110,718.4 0.257 28,454.6|110,717.9 0.133 14,725.5|110,717.7 0.01 1,107.2|110,716.3 0.168 18,600.3|110,715.4 0.488 54,029.1|110,715.2 3.701 409,757|110,715.0 0.225 24,910.9|110,714.9 0.471 52,146.7|110,714.8 1.88 208,143.8|110,714.1 0.05 5,535.7|110,711.8 0.14 15,499.7|110,710.6 0.231 25,574.1|110,710.1 0.324 35,870.1|110,709.9 0.28 30,998.8|110,709.8 1.355 150,011.8|110,709.7 0.48 53,140.7|110,709.6 0.09 9,963.9|110,708.0 0.46 50,925.7|110,705.8 0.135 14,945.3|110,705.6 0.447 49,485.4|110,703.0 0.032 3,542.5|110,702.6 0.036 3,985.3|110,697.0 0.386 42,729`;
const BIDS = `110,696.4 0.065 7,195.3|110,695.5 1.509 167,039.5|110,694.0 0.046 5,091.9|110,693.1 0.008 885.5|110,692.8 0.085 9,408.9|110,690.8 0.552 61,101.3|110,689.9 1.334 147,660.3|110,688.1 0.035 3,874.1|110,687.6 0.169 18,706.2|110,687.5 0.182 20,145.1|110,687.3 1.229 136,034.7|110,686.9 0.032 3,542|110,686.8 0.623 68,957.9|110,686.6 0.025 2,767.2|110,686.2 0.039 4,316.8|110,685.7 0.48 53,129.1|110,685.6 0.823 91,094.2|110,684.9 0.088 9,740.3|110,683.9 0.133 14,721|110,682.9 0.015 1,660.2|110,682.8 0.037 4,095.3|110,682.7 0.173 19,148.1|110,682.6 0.528 58,440.4|110,682.4 0.043 4,759.3|110,682.2 0.359 39,734.9|110,682.0 0.076 8,411.8|110,681.7 0.507 56,115.6`;

const Side = ({ rows, side, pt }) => {
  const list = rows.split('|').map((r) => r.split(' '));
  const num = (s) => Number(s.replace(/,/g, ''));
  const max = Math.max(...list.map((r) => num(r[2])));
  return (
    <BookList $pt={pt}>
      {list.map(([price, amount, total]) => (
        <BookRow key={price}>
          <PriceCell $side={side}>{price}</PriceCell>
          <NumCell $w={3.01}>{amount}</NumCell>
          <NumCell $w={2.75}>{total}</NumCell>
          <Depth $side={side} style={{ width: `${(num(total) / max) * 100}%` }} />
        </BookRow>
      ))}
    </BookList>
  );
};

const BookIcon = ({ top, bottom, notched }) => (
  <Icon $w={0.25} viewBox="0 0 25 25">
    {notched.map((cut, i) => (
      <rect key={i} x={cut ? 8 : 0} y={i * 7} width={cut ? 17 : 25} height="3.600" rx="1" fill={i < 2 ? top : bottom} />
    ))}
    {notched[0] && <rect x="0" y="0" width="3.600" height="10.600" rx="1" fill={top} />}
    {notched[3] && <rect x="0" y="14" width="3.600" height="10.600" rx="1" fill={bottom} />}
  </Icon>
);

const OrderBook = () => (
  <Panel $w={8.81} $h={26.96}>
    <BookBody>
      <Title>Order Book</Title>
      <BookControls>
        <StepSelect>0.1 <Caret $s={0.085} $h={0.09} $c={C.text} /></StepSelect>
        <RoundSlot><BookIcon top="#d43f3c" bottom="#d43f3c" notched={[true, true, false, false]} /></RoundSlot>
        <RoundSlot><BookIcon top={C.greenDeep} bottom={C.greenDeep} notched={[false, false, true, true]} /></RoundSlot>
        <RoundSlot $on><BookIcon top={C.red} bottom={C.green} notched={[true, true, true, true]} /></RoundSlot>
      </BookControls>
      <BookHead>
        <PriceCell>Price<br />(USDT)</PriceCell>
        <NumCell $w={3.01}>Amount<br />(BTC)</NumCell>
        <NumCell $w={2.75}>Total</NumCell>
      </BookHead>
      <Side rows={ASKS} side="ask" pt={0.13} />
      <MidPrice><b>110,696.5</b> 110,695.5</MidPrice>
      <Side rows={BIDS} side="bid" pt={0} />
    </BookBody>
  </Panel>
);

/* ---------- order form ---------- */
const FormBody = styled.div`
  padding: 0.24rem 0.24rem 0 0.32rem;
  display: flex;
  flex-direction: column;
`;

const FormHead = styled.div`
  display: flex;
  align-items: center;
  height: 0.64rem;
  gap: 0.16rem;
  h2 { margin-right: auto; }
`;

const ModeBar = styled.div`
  margin-top: 0.32rem;
  height: 0.64rem;
  border-radius: 0.32rem;
  background: ${C.field};
  display: flex;
  align-items: center;
  padding-left: 1.19rem;
  font-size: 0.28rem;
  font-weight: 600;
`;

const ModeRule = styled.i`
  width: 0.02rem;
  height: 0.32rem;
  margin: 0 0.08rem 0 auto;
  background: #3a3b40;
`;

const ModeName = styled.span`
  width: 1.32rem;
  display: flex;
  align-items: center;
`;

const Leverage = styled.span`
  width: 0.84rem;
  height: 0.48rem;
  line-height: 0.48rem;
  margin-right: 0.08rem;
  border-radius: 0.24rem;
  text-align: center;
  font-size: 0.24rem;
  font-weight: 400;
  color: ${(p) => (p.$red ? '#cb3f3b' : C.greenDeep)};
  background: ${(p) => (p.$red ? '#433234' : '#313d3a')};
`;

const ModeArrow = styled.div`margin-left: 0.16rem;`;

const Tabs = styled.div`
  margin-top: 0.32rem;
  height: 0.64rem;
  padding: 0.08rem 0.12rem;
  border-radius: 0.08rem;
  background: ${C.field};
  display: flex;
`;

const Tab = styled.div`
  flex: 1;
  border-radius: 0.08rem;
  line-height: 0.48rem;
  text-align: center;
  font-weight: 500;
  color: ${(p) => (p.$on ? '#fff' : C.text)};
  background: ${(p) => (p.$on ? C.blueDeep : 'transparent')};
`;

const Avail = styled.div`
  height: 1.04rem;
  display: flex;
  align-items: center;
  padding: 0 0.04rem 0 0.03rem;
  gap: 0.11rem;
  color: ${C.muted};
  em { margin-left: auto; font-style: normal; }
  b { font-weight: 400; color: ${C.text}; }
  em + svg { margin-left: -0.06rem; }
`;

const Field = styled.div`
  height: 0.8rem;
  margin-bottom: 0.16rem;
  padding: 0 ${(p) => p.$pr || 0.34}rem 0 0.34rem;
  border-radius: 0.16rem;
  background: ${C.field};
  display: flex;
  align-items: center;
  font-size: 0.28rem;
  color: ${C.muted};
  b { margin-left: auto; margin-right: 0.17rem; font-weight: 400; color: ${C.text}; }
  a { margin-left: 0.08rem; font-size: 0.24rem; font-weight: 400; color: ${C.blue}; }
`;

const FieldLabel = styled.span`
  display: flex;
  align-items: center;
  gap: 0.23rem;
  margin-right: auto;
`;

const SliderLabels = styled.div`
  display: flex;
  margin: 0.08rem -0.45rem 0 -0.42rem;
  height: 0.32rem;
  color: #46484f;
  span { width: 1.32rem; text-align: center; }
`;

const Slider = styled.div`
  display: flex;
  align-items: center;
  width: 5.61rem;
  height: 0.48rem;
  background: linear-gradient(${C.field}, ${C.field}) center / 100% 0.16rem no-repeat;
  border-radius: 0.1rem;
`;

const Knob = styled.i`
  width: 0.48rem;
  height: 0.48rem;
  margin-right: -0.15rem;
  border-radius: 50%;
  background: ${C.blueDeep};
`;

const Stop = styled.i`
  width: 0.18rem;
  height: 0.18rem;
  margin-left: 1.139rem;
  border-radius: 50%;
  background: #4a4b4e;
`;

const CostBox = styled.div`
  margin-top: 0.4rem;
  height: 1.56rem;
  padding: 0.2rem 0.33rem 0 0.33rem;
  border: 0.02rem solid #464852;
  border-radius: 0.16rem;
`;

const CostRow = styled.div`
  display: flex;
  height: 0.56rem;
  align-items: center;
  justify-content: space-between;
  color: ${C.dim};
  span { color: ${C.text}; word-spacing: 0.02rem; }
  b { font-weight: 400; color: ${C.green}; }
  i { font-style: normal; color: ${C.red}; }
`;

const CheckRow = styled.label`
  display: flex;
  align-items: center;
  gap: 0.21rem;
  margin: 0.52rem 0 0.36rem 0.04rem;
  height: 0.4rem;
`;

const Actions = styled.div`
  display: flex;
  gap: 0.16rem;
`;

const OrderForm = () => (
  <Panel $h={14.4}>
    <FormBody>
      <FormHead>
        <Title>Order Form</Title>
        <RoundSlot $on>
          <Icon $w={0.26} viewBox="0 0 26 26" $fill="#6f7480">
            <path d="M0 6l5-2v17q0 3 3 3h8l-9 2q-3 0-4-3z" />
            <rect x="8" y="0" width="18" height="21" rx="3" />
            <text x="17" y="17" fontSize="17" fontWeight="700" textAnchor="middle" fill="#27282a" fontFamily="Inter">?</text>
          </Icon>
        </RoundSlot>
        <RoundSlot $on>
          <Icon $w={0.28} $h={0.26} viewBox="0 0 28 26" $fill="#6f7480">
            <path fillRule="evenodd" d="M9 0h10q2 0 3 2l5 9q1 2 0 4l-5 9q-1 2-3 2H9q-2 0-3-2L1 15q-1-2 0-4l5-9q1-2 3-2zm5 8.500a4.500 4.500 0 1 0 0 9 4.500 4.500 0 1 0 0-9z" />
          </Icon>
        </RoundSlot>
      </FormHead>
      <ModeBar>
        <ModeName>Isolated <ModeRule /></ModeName>
        <Leverage>150x</Leverage>
        <Leverage $red>150x</Leverage>
        <ModeArrow>
          <Icon $w={0.19} $h={0.27} viewBox="0 0 19 27" $stroke="#7b7f8a" $sw={4} $cap="round"><path d="M3 2l12 11.500L3 25" /></Icon>
        </ModeArrow>
      </ModeBar>
      <Tabs><Tab $on>Limit</Tab><Tab>Market</Tab></Tabs>
      <Avail>
        <InfoIcon /> AVAIL:
        <em><b>9.91117381</b> USDT</em>
        <Icon $w={0.25} $h={0.24} viewBox="0 0 25 24" $stroke="#2f86f6" $sw={3}>
          <path d="M0 8.500h18M25 15.500H7" />
          <path d="M16 0l9 10h-9zM9 24L0 14h9z" fill="#2f86f6" stroke="none" />
        </Icon>
      </Avail>
      <Field>Price <b>110429.4</b> USDT <a>Last</a></Field>
      <Field $pr={0.42}><FieldLabel>Amount <Chevron /></FieldLabel> BTC</Field>
      <SliderLabels>{[0, 25, 50, 75, 100].map((n) => <span key={n}>{n}%</span>)}</SliderLabels>
      <Slider><Knob /><Stop /><Stop /><Stop /><Stop /></Slider>
      <CostBox>
        <CostRow>Value <span><b>0</b> / <i>0</i> USDT</span></CostRow>
        <CostRow>Cost <span><b>0</b> / <i>0</i> USDT</span></CostRow>
      </CostBox>
      <CheckRow><CheckBox /> Take Profit / Stop Loss</CheckRow>
      <Actions>
        <PillButton $w={2.8} $h={0.8} $bg={C.greenDeep}>Buy / Long</PillButton>
        <PillButton $w={2.8} $h={0.8} $bg={C.redDeep}>Sell / Short</PillButton>
      </Actions>
    </FormBody>
  </Panel>
);

/* ---------- margin, assets ---------- */
const SideBody = styled.div`
  padding: ${(p) => p.$pt}rem 0.24rem 0 0.32rem;
`;

const SideRow = styled.div`
  display: flex;
  align-items: center;
  height: ${(p) => p.$h}rem;
  color: ${C.muted};
  b { font-size: 0.33rem; font-weight: 500; color: ${C.greenDeep}; }
`;

const Gauge = styled.div`margin: 0 0.2rem 0 auto;`;

const AssetWrap = styled.div`position: relative;`;

const AssetSelect = styled.div`
  width: 5.12rem;
  height: 0.8rem;
  padding: 0.03rem 0.26rem 0 0.33rem;
  display: flex;
  align-items: center;
  justify-content: space-between;
  border: 0.02rem solid #33343a;
  border-radius: 0.16rem;
  font-size: 0.28rem;
`;

const AssetLine = styled.div`
  display: flex;
  align-items: center;
  justify-content: space-between;
  padding-right: 0.03rem;
`;

const SelectPad = styled.div`
  padding: 0 0.24rem 0 0.32rem;
  margin-top: -0.14rem;
`;

const Tooltip = styled.div`
  position: absolute;
  left: 0.48rem;
  bottom: 1rem;
  width: 5.6rem;
  height: 4.68rem;
  padding: 0.19rem 0.185rem 0;
  border-radius: 0.12rem;
  background: #36383f;
  box-shadow: 0 0.06rem 0.4rem rgba(0, 0, 0, 0.35);
  font-size: 0.28rem;
  line-height: 0.48rem;
  white-space: pre;
  &::after {
    content: '';
    position: absolute;
    right: 0.06rem;
    top: 100%;
    border: 0.12rem solid transparent;
    border-top-color: #36383f;
    border-bottom: 0;
  }
`;

const TIP = `Supports USDT-M Futures trading
by only using the single margin asset
of the symbol.

PNL of the same margin asset positions
can be offset.

Supports Cross Margin Mode and
Isolated Margin Mode.`;

const MarginPanel = () => (
  <Panel $h={2.8}>
    <SideBody $pt={0.33}>
      <Title>Margin Ratio</Title>
      <SideRow $h={0.95}>
        Margin Ratio
        <Gauge>
          <Icon $w={0.4} viewBox="0 0 40 40" $sw={4}>
            <path d="M10 36A18 18 0 0 1 3.500 13" stroke={C.green} />
            <path d="M3.500 13A18 18 0 0 1 36.500 13" stroke={C.orange} />
            <path d="M36.500 13A18 18 0 0 1 30 36" stroke={C.red} />
            <path d="M13 31l6-9" stroke={C.text} strokeWidth="3" />
            <circle cx="20.500" cy="20" r="3" stroke={C.text} strokeWidth="2" />
          </Icon>
        </Gauge>
        <b>0.00%</b>
      </SideRow>
      <SideRow $h={0.32}>Maint. Margin</SideRow>
      <SideRow $h={0.8}>Margin Balance</SideRow>
    </SideBody>
  </Panel>
);

const AssetsPanel = () => (
  <AssetWrap>
    <Panel $h={4.32}>
      <SideBody $pt={0.52}>
        <Title>Assets</Title>
        <SideRow $h={1.27}>Balance</SideRow>
        <SideRow $h={0}>Futures</SideRow>
        <SideRow $h={1.23}>Unrealized PNL</SideRow>
      </SideBody>
      <SelectPad>
        <AssetLine>
          <AssetSelect>Single Asset Mode <Caret $s={0.125} $h={0.12} $c={C.text} /></AssetSelect>
          <InfoIcon />
        </AssetLine>
      </SelectPad>
    </Panel>
    <Tooltip>{TIP}</Tooltip>
  </AssetWrap>
);

/* ---------- market tradings ---------- */
const TradeHead = styled.div`
  display: flex;
  align-items: center;
  height: 0.64rem;
  margin-top: 0.4rem;
  color: ${C.muted};
`;

const TradeScroll = styled.div`
  margin-top: 0.12rem;
  height: 9.32rem;
  overflow: hidden;
  display: flex;
`;

const TradeList = styled.div`
  flex: 1;
  margin-top: -0.16rem;
  padding-left: 0.32rem;
`;

const TradeRow = styled.div`
  display: flex;
  align-items: center;
  height: 0.44rem;
  color: ${C.mid};
`;

const ScrollTrack = styled.div`
  width: 0.14rem;
  padding: 5.61rem 0 0 0.05rem;
  background: #fafafa;
  border-left: 0.02rem solid #e8e8e8;
`;

const ScrollThumb = styled.div`
  height: 4rem;
  border-radius: 0.06rem 0 0 0;
  background: #c1c1c1;
`;

const TRADES = `r 110,428.1 0.01700 12:21:43|g 110,400.1 0.00200 12:21:38|g 110,410.0 0.06700 12:21:33|r 110,444.9 0.00100 12:21:28|g 110,444.9 0.00200 12:21:23|g 110,469.1 0.00300 12:21:18|g 110,474.3 0.01500 12:21:13|r 110,466.2 0.35000 12:21:08|g 110,491.5 0.00100 12:21:03|r 110,502.7 0.00300 12:20:58|r 110,498.0 0.00100 12:20:53|r 110,492.7 0.00200 12:20:48|g 110,486.1 0.00200 12:20:43|r 110,510.2 0.12300 12:20:38|g 110,476.3 0.00200 12:20:33|g 110,456.5 0.00500 12:20:28|g 110,451.4 0.33300 12:20:23|r 110,429.4 0.04400 12:20:18|g 110,429.4 0.45900 12:20:13|r 110,429.5 0.00100 12:20:08|r 110,429.4 0.12200 12:20:03`
  .split('|').map((r) => r.split(' '));

const MarketTradings = () => (
  <Panel $h={11.12}>
    <SideBody $pt={0.32}>
      <Title>Market Tradings</Title>
      <TradeHead>
        <PriceCell $w={2}>Price<br />(USDT)</PriceCell>
        <NumCell $w={2.03}>Amount<br />(BTC)</NumCell>
        <NumCell $w={1.73}>Time</NumCell>
      </TradeHead>
    </SideBody>
    <TradeScroll>
      <TradeList>
        {TRADES.map(([d, price, amount, time]) => (
          <TradeRow key={time}>
            <PriceCell $w={2} $side={d === 'g' ? 'bid' : 'ask'}>{price}</PriceCell>
            <NumCell $w={1.875}>{amount}</NumCell>
            <NumCell $w={1.66}>{time}</NumCell>
          </TradeRow>
        ))}
      </TradeList>
      <ScrollTrack><ScrollThumb /></ScrollTrack>
    </TradeScroll>
  </Panel>
);

/* ---------- orders table ---------- */
const OrderTabs = styled.nav`
  height: 1.04rem;
  padding-left: 0.16rem;
  display: flex;
  align-items: center;
  gap: 0.26rem;
  font-size: 0.281rem;
  font-weight: 500;
  color: ${C.dim};
  b { font-weight: 500; color: ${C.blue}; }
`;

const Table = styled.div`
  margin: 0 0.24rem 0 0.16rem;
  height: 4.08rem;
  overflow: hidden;
`;

const TableRow = styled.div`
  display: grid;
  grid-template-columns: 5.71rem 3.55rem 4.47rem 7.29rem 2.715rem 3.46rem 3.465rem 4.015rem 4.495rem 6.23rem;
  height: ${(p) => (p.$head ? 0.5 : 0.98)}rem;
  padding: 0 0.16rem ${(p) => (p.$head ? 0.15 : 0)}rem;
  align-items: center;
  border-bottom: 0.02rem solid ${C.line};
  color: ${(p) => (p.$head ? C.muted : C.text)};
`;

const Cell = styled.div`
  padding: 0 0.16rem;
  display: flex;
  align-items: center;
  justify-content: ${(p) => (p.$r ? 'flex-end' : 'flex-start')};
  color: ${(p) => p.$c || 'inherit'};
`;

const TypeCell = styled.div`
  padding: 0 0.16rem;
  display: flex;
  justify-content: space-between;
`;

const SideMark = styled.i`
  width: 0.07rem;
  height: 0.64rem;
  margin-right: 0.17rem;
  border-radius: 0.04rem;
  background: ${(p) => (p.$side === 'g' ? C.green : C.red)};
`;

const PairCell = styled.div`
  width: 1.48rem;
  line-height: 0.33rem;
  span { color: ${C.muted}; }
`;

const Mult = styled.span`
  width: 0.6rem;
  height: 0.48rem;
  line-height: 0.48rem;
  border-radius: 0.24rem;
  text-align: center;
  color: #fa9a28;
  background: #2e2820;
`;

const Dot = styled.i`
  width: 0.16rem;
  height: 0.16rem;
  margin-right: 0.08rem;
  border-radius: 50%;
  background: ${(p) => p.$c};
`;

const IdCell = styled(Cell)`
  gap: 0.18rem;
  padding-right: 0.18rem;
  line-height: 0.32rem;
  span { padding-top: 0.06rem; letter-spacing: -0.0015rem; }
  svg { display: block; width: 0.28rem; height: 0.29rem; margin-top: -0.08rem; color: #7b7f8a; }
`;

const StatusHead = styled(Cell)`gap: 0.14rem;`;

const ORDERS = [
  ['g', 'Filled', '12:16:13', 'Close Market', '110,480.9', '--', '0.00010 BTC', '11.04809 USDT', '977771841546623954', '0.006629 USDT'],
  ['r', 'Filled', '12:11:11', 'Limit', '110,550.0', '110,549.9', '0.00010 BTC', '11.055 USDT', '977770568025907309', '0.006633 USDT'],
  ['r', 'Cancelled', '12:11:03', 'Limit', '--', '110,607.0', '--', '--', '977770444830813887', '--'],
  ['g', 'Cancelled', '12:03:47', 'Limit', '--', '110,320.0', '--', '--', '977768681671234744', '--'],
];

const HidePairs = styled.label`
  display: flex;
  align-items: center;
  gap: 0.2rem;
  margin: 0.28rem 0 0 0.2rem;
  height: 0.4rem;
`;

const OrdersPanel = () => (
  <Panel $w={46.12} $h={5.84}>
    <OrderTabs>
      <span>Positions (0)</span><span>Open Orders (0)</span><span>Position History</span><b>Order History</b><span>Funding</span>
    </OrderTabs>
    <Table>
      <TableRow $head>
        <Cell>Pair</Cell>
        <StatusHead>All Status <Chevron w={0.21} color={C.text} /></StatusHead>
        <Cell>Time</Cell>
        <TypeCell><span>Order Type</span><span>Average Price</span></TypeCell>
        <Cell $r>Price</Cell>
        <Cell $r>Executed</Cell>
        <Cell $r>Amount</Cell>
        <Cell $r>Total</Cell>
        <Cell $r>Order ID</Cell>
        <TypeCell><span>Role</span><span>Total Fees</span></TypeCell>
      </TableRow>
      {ORDERS.map(([side, status, time, type, avg, price, exec, total, id, fee]) => (
        <TableRow key={id}>
          <Cell>
            <SideMark $side={side} />
            <PairCell>BTC / USDT<br /><span>Perpetual</span></PairCell>
            <Mult>2x</Mult>
          </Cell>
          <Cell $c={status === 'Filled' ? C.text : C.muted}>
            <Dot $c={status === 'Filled' ? C.green : C.text} />{status}
          </Cell>
          <Cell>2025/05/22 ({time})</Cell>
          <TypeCell><span>{type}</span><span>{avg}</span></TypeCell>
          <Cell $r>{price}</Cell>
          <Cell $r>{exec}</Cell>
          <Cell $r>0.00010 BTC</Cell>
          <Cell $r>{total}</Cell>
          <IdCell $r><span>{id}</span><Copy strokeWidth={2} /></IdCell>
          <TypeCell><span>Taker</span><span>{fee}</span></TypeCell>
        </TableRow>
      ))}
    </Table>
    <HidePairs><CheckBox /> Hide other pairs</HidePairs>
  </Panel>
);

/* ---------- layout ---------- */
const Main = styled.main`
  margin-top: 0.08rem;
  height: 32.88rem;
  flex: none;
  display: flex;
  gap: 0.08rem;
`;

const Left = styled.div`
  width: 46.12rem;
  display: flex;
  flex-direction: column;
  gap: 0.08rem;
`;

const LeftTop = styled.div`
  display: flex;
  gap: 0.08rem;
`;

const Right = styled.div`
  width: 6.32rem;
  display: flex;
  flex-direction: column;
  gap: 0.08rem;
`;

const Footer = styled.footer`
  margin-top: 0.06rem;
  height: 0.64rem;
  flex: none;
  position: relative;
  display: flex;
  align-items: center;
  padding: 0.1rem 0.16rem 0 0.16rem;
  background: ${C.panel};
  border-top: 0.02rem solid #27282b;
  color: ${C.greenDeep};
  svg.wifi { width: 0.38rem; height: 0.38rem; margin-right: 0.15rem; }
`;

const FooterLinks = styled.div`
  margin-left: auto;
  display: flex;
  gap: 0.65rem;
  font-size: 0.28rem;
  font-weight: 450;
  color: ${C.text};
`;

const ChatButton = styled.button`
  position: absolute;
  right: 0.16rem;
  bottom: 0.06rem;
  width: 0.96rem;
  height: 0.96rem;
  padding: 0;
  border: 0;
  border-radius: 50%;
  background: ${C.blueDeep};
  display: flex;
  align-items: center;
  justify-content: center;
`;

export default function App() {
  return (
    <Page>
      <Global />
      <HeaderBar />
      <Main>
        <Left>
          <LeftTop>
            <ChartPanel />
            <OrderBook />
          </LeftTop>
          <OrdersPanel />
        </Left>
        <Right>
          <OrderForm />
          <MarginPanel />
          <AssetsPanel />
          <MarketTradings />
        </Right>
      </Main>
      <Footer>
        <Wifi className="wifi" strokeWidth={2.4} /> Stable connection
        <FooterLinks><span>Help &amp; Support</span><span>Download App</span></FooterLinks>
        <ChatButton>
          <Icon $w={0.4} viewBox="0 0 40 40">
            <path d="M2 26V20a18 18 0 0 1 36 0v10q0 7-7 7h-9" stroke="#fff" strokeWidth="4" />
            <rect x="0" y="22" width="11" height="14" rx="5" fill="#fff" />
            <rect x="29" y="22" width="11" height="14" rx="5" fill="#fff" />
          </Icon>
        </ChatButton>
      </Footer>
    </Page>
  );
}
